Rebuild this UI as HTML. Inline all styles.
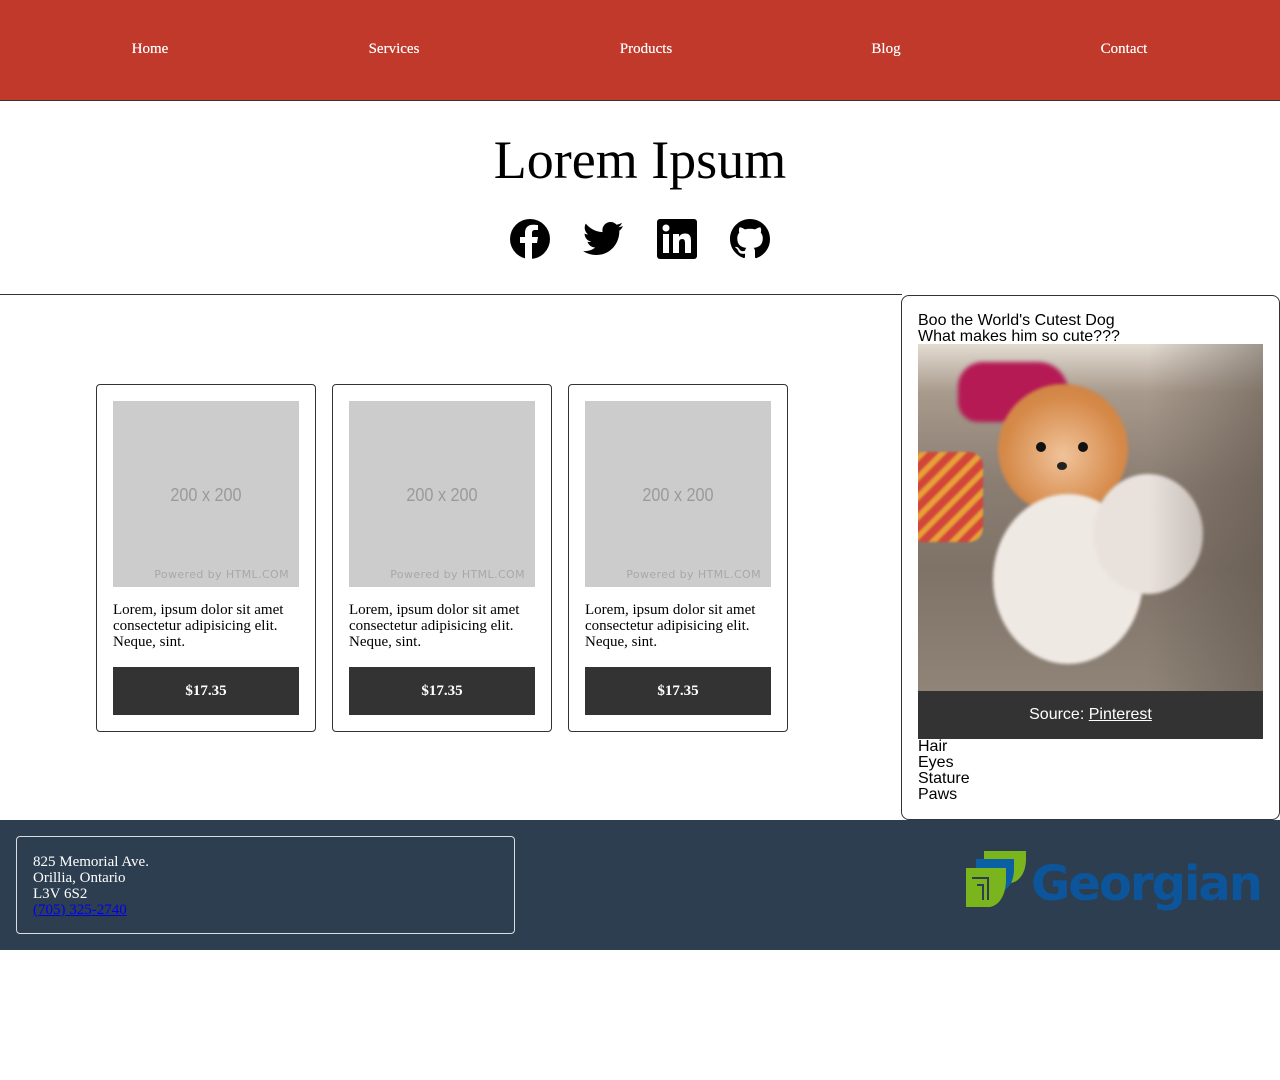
<!DOCTYPE html>
<html><head><meta charset="utf-8"><style>
*{box-sizing:border-box}
body{margin:0;background:#fff;font-family:"Liberation Serif",serif;width:1280px;height:1080px;overflow:hidden;position:relative}
.nav{position:absolute;left:0;top:0;width:1280px;height:101px;background:#c0392b;border-bottom:1px solid #333}
.nav span{position:absolute;top:41px;color:#fff;font-size:15px;font-weight:normal;transform:translateX(-50%);text-shadow:0 0 .4px #fff}
h1{position:absolute;top:130px;left:0;width:1280px;text-align:center;margin:0;font-weight:normal;font-size:54px;line-height:60px}
.icons svg{position:absolute;top:219px}
.hr{position:absolute;left:0;top:294px;width:902px;border-top:1px solid #333}
.card{position:absolute;top:384px;width:220px;height:348px;border:1px solid #333;border-radius:4px}
.ph{position:absolute;left:16px;top:16px;width:186px;height:186px;background:#ccc;color:#999;font-family:"DejaVu Sans",sans-serif}
.ph .a{position:absolute;top:84px;width:100%;text-align:center;font-size:18px;color:#9a9a9a;font-family:"Liberation Sans Narrow","Liberation Sans",sans-serif;transform:scaleX(.9)}
.ph .b{position:absolute;bottom:6px;right:10px;font-size:11px;color:#a8a8a8;letter-spacing:.4px}
.card p{position:absolute;left:16px;top:217px;margin:0;font-size:15px;line-height:16px;width:190px}
.btn{position:absolute;left:16px;top:282px;width:186px;height:48px;background:#333;color:#fff;font-weight:bold;font-size:15px;text-align:center;line-height:48px}
.side{position:absolute;left:901px;top:295px;width:379px;height:525px;border:1px solid #333;border-radius:8px;font-family:"Liberation Sans",sans-serif;font-size:16px;line-height:16px}
.foot{position:absolute;left:0;top:820px;width:1280px;height:130px;background:#2c3e50}
.addr{position:absolute;left:16px;top:16px;width:499px;height:98px;border:1px solid #ddd;border-radius:4px;color:#fff;font-size:15px;line-height:16px;padding:17px 16px}
</style></head><body>
<div class="nav"><span style="left:150px">Home</span><span style="left:394px">Services</span><span style="left:646px">Products</span><span style="left:886px">Blog</span><span style="left:1124px">Contact</span></div>
<h1>Lorem Ipsum</h1>
<div class="icons">
<svg style="left:510px" width="40" height="40" viewBox="0 0 40 40"><circle cx="20" cy="20" r="20"/><path d="M22 40V24h5l1-6h-6v-4c0-2 1-3 3-3h3V6c-1 0-3-.3-5-.3-5 0-8 3-8 8V18h-5v6h5v16z" fill="#fff"/></svg>
<svg style="left:582px" width="42" height="40" viewBox="0 0 42 40"><path d="M41 7c-1.5.7-3 1-4.7 1.3 1.7-1 3-2.6 3.6-4.5-1.6 1-3.4 1.6-5.2 2C33 4 31 3 28.6 3c-4.5 0-8.2 3.7-8.2 8.2 0 .6.1 1.3.2 1.9C13.8 12.8 7.8 9.5 3.8 4.6c-.7 1.2-1.1 2.6-1.1 4.1 0 2.8 1.5 5.3 3.6 6.8-1.3 0-2.6-.4-3.7-1v.1c0 4 2.8 7.3 6.6 8.1-1.2.3-2.5.4-3.7.1 1 3.3 4.1 5.7 7.7 5.7-3.4 2.7-7.8 4-12 3.6C4.8 34.4 9.2 36 14 36c15.1 0 23.3-12.5 23.3-23.3v-1C39 10.5 40.2 8.8 41 7z"/></svg>
<svg style="left:657px" width="40" height="40" viewBox="0 0 40 40"><rect width="40" height="40" rx="3"/><rect x="6" y="15" width="6" height="19" fill="#fff"/><circle cx="9" cy="9" r="3.5" fill="#fff"/><path d="M16 15h6v3c1-2 3-3.5 6-3.5 5 0 6 3 6 7.5V34h-6V24c0-2.5-.5-4-2.8-4-2.5 0-3.2 1.8-3.2 4v10h-6z" fill="#fff"/></svg>
<svg style="left:730px" width="40" height="40" viewBox="0 0 16 16"><path d="M8 0C3.58 0 0 3.58 0 8c0 3.54 2.29 6.53 5.47 7.590.4.07.55-.17.55-.38v-1.33c-2.23.48-2.7-1.070-2.7-1.07-.36-.92-.89-1.17-.89-1.17-.73-.5.05-.49.05-.49.8.06 1.23.83 1.23.83.71 1.22 1.87.87 2.33.66.07-.52.28-.87.51-1.07-1.78-.2-3.64-.89-3.64-3.95 0-.87.31-1.59.82-2.15-.08-.2-.36-1.02.08-2.12 0 0 .67-.21 2.2.82.64-.18 1.32-.27 2-.27.68 0 1.36.09 2 .27 1.53-1.04 2.2-.82 2.2-.82.44 1.1.16 1.92.08 2.12.51.56.82 1.27.82 2.15 0 3.07-1.87 3.75-3.65 3.95.29.25.54.73.54 1.48v2.2c0 .21.15.46.55.38A8.013 8.013 0 0016 8c0-4.42-3.58-8-8-8z"/></svg>
</div>
<div class="hr"></div>
<div class="card" style="left:96px"><div class="ph"><div class="a">200 x 200</div><div class="b">Powered by HTML.COM</div></div><p>Lorem, ipsum dolor sit amet consectetur adipisicing elit. Neque, sint.</p><div class="btn">$17.35</div></div>
<div class="card" style="left:332px"><div class="ph"><div class="a">200 x 200</div><div class="b">Powered by HTML.COM</div></div><p>Lorem, ipsum dolor sit amet consectetur adipisicing elit. Neque, sint.</p><div class="btn">$17.35</div></div>
<div class="card" style="left:568px"><div class="ph"><div class="a">200 x 200</div><div class="b">Powered by HTML.COM</div></div><p>Lorem, ipsum dolor sit amet consectetur adipisicing elit. Neque, sint.</p><div class="btn">$17.35</div></div>
<div class="side">
<div style="position:absolute;left:16px;top:17px">Boo the World's Cutest Dog<br>What makes him so cute???</div>
<div style="position:absolute;left:16px;top:48px;width:345px;height:347px;background:linear-gradient(180deg,#e4dcd2 0%,#a89a8c 14%,#8a7d72 40%,#7f7368 65%,#8f8477 100%);overflow:hidden">
<div style="position:absolute;left:40px;top:18px;width:110px;height:60px;background:#b51a55;border-radius:25px 30px 10px 20px;filter:blur(2px)"></div>
<div style="position:absolute;left:-10px;top:108px;width:75px;height:90px;background:repeating-linear-gradient(135deg,#d2453a 0 8px,#e8a038 8px 14px);border-radius:14px;filter:blur(1px)"></div>
<div style="position:absolute;left:80px;top:40px;width:130px;height:130px;background:radial-gradient(circle at 50% 55%,#f0c39a,#d68a4a 60%,#c87a3a);border-radius:50%;filter:blur(1.5px)"></div>
<div style="position:absolute;left:75px;top:150px;width:150px;height:170px;background:#efe9e4;border-radius:50%;filter:blur(1.5px)"></div>
<div style="position:absolute;left:175px;top:130px;width:110px;height:120px;background:#e9e2dc;border-radius:50%;filter:blur(1.5px)"></div>
<div style="position:absolute;left:118px;top:98px;width:10px;height:10px;background:#111;border-radius:50%"></div>
<div style="position:absolute;left:160px;top:98px;width:10px;height:10px;background:#111;border-radius:50%"></div>
<div style="position:absolute;left:139px;top:118px;width:10px;height:8px;background:#222;border-radius:50%"></div>
<div style="position:absolute;left:230px;top:0;width:115px;height:347px;background:linear-gradient(90deg,rgba(0,0,0,0),rgba(90,80,72,.5))"></div>
</div>
<div style="position:absolute;left:16px;top:395px;width:345px;height:48px;background:#333;color:#fff;text-align:center;line-height:48px">Source: <u>Pinterest</u></div>
<div style="position:absolute;left:16px;top:443px">Hair<br>Eyes<br>Stature<br>Paws</div>
</div>
<div class="foot">
<svg style="position:absolute;left:964px;top:28px" width="64" height="64" viewBox="0 0 64 64"><path d="M20 3h42v8c0 12-5 22-15 24V11H20z" fill="#7ab51d"/><path d="M12 11h38v10c0 12-5 21-14 23V20H12z" fill="#0a5fa5"/><path d="M2 20h40v12c0 12-5 25-16 27H2z" fill="#7ab51d"/><path d="M8 30h16v22M13 37h6v15" stroke="#2c3e50" stroke-width="2" fill="none"/></svg>
<div class="addr">825 Memorial Ave.<br>Orillia, Ontario<br>L3V 6S2<br><u style="color:#00e">(705) 325-2740</u></div>
<div style="position:absolute;left:1031px;top:34px;color:#0c559b;font-family:'DejaVu Sans',sans-serif;font-weight:bold;font-size:48px;line-height:60px;letter-spacing:-2px">Georgian</div>
</div>
</body></html>
